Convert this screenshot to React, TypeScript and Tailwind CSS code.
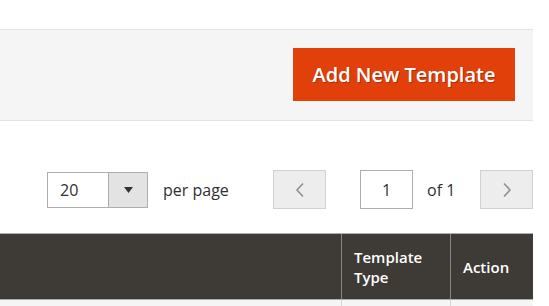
const font = { fontFamily: '"Open Sans", "Liberation Sans", sans-serif' };

const Chevron = ({ dir }: { dir: 'left' | 'right' }) => (
  <svg width="10" height="16" viewBox="0 0 10 16" fill="none" stroke="#8f8f8f" strokeWidth="1.6">
    {dir === 'left' ? <polyline points="8,1.5 2,8 8,14.5" /> : <polyline points="2,1.5 8,8 2,14.5" />}
  </svg>
);

export default function App() {
  return (
    <div className="h-[306px] w-[549px] overflow-hidden bg-white pr-4 text-[#303030]" style={font}>
      <div className="h-[29px]" />

      <div className="flex h-[92px] items-start justify-end border-y border-[#e3e3e3] bg-[#f5f5f5] pr-[18px] pt-[18px]">
        <button className="h-[53px] w-[222px] bg-[#e2400b] text-[20px] font-semibold text-white [text-shadow:1px_1px_0_rgba(0,0,0,0.25)]">Add New Template</button>
      </div>

      <div className="mt-[49px] flex h-[39px] items-center">
        <div className="ml-[47px] flex h-[36px] w-[101px] border border-[#adadad]">
          <span className="flex w-[60px] items-center pl-[12px] text-[16px]">20</span>
          <span className="flex flex-1 items-center justify-center border-l border-[#adadad] bg-[#e3e3e3]">
            <svg width="9" height="6" viewBox="0 0 9 6"><polygon points="0,0 9,0 4.5,6" fill="#333" /></svg>
          </span>
        </div>
        <span className="ml-[15px] w-[110px] text-[16px]">per page</span>

        <button className="flex h-[39px] w-[53px] items-center justify-center border border-[#d1d1d1] bg-[#ededed]">
          <Chevron dir="left" />
        </button>
        <div className="ml-[34px] flex h-[39px] w-[53px] items-center justify-center border border-[#adadad] text-[16px]">1</div>
        <span className="ml-[14px] text-[16px]">of 1</span>
        <button className="ml-auto flex h-[39px] w-[53px] items-center justify-center border border-[#d1d1d1] bg-[#ededed]">
          <Chevron dir="right" />
        </button>
      </div>

      <div className="mt-[24px] flex h-[67px] border-y border-[#adadad] bg-[#3e3a35] text-[15px] font-semibold leading-[20px] text-white">
        <div className="flex-1 border-r border-[#8a837f]" />
        <div className="flex w-[109px] items-center border-r border-[#8a837f] pl-[12px]">
          Template
          <br />
          Type
        </div>
        <div className="flex w-[82px] items-center pl-[12px]">Action</div>
      </div>
      <div className="flex h-[10px] bg-[#f5f5f5]">
        <div className="flex-1 border-r border-[#d6d6d6]" />
        <div className="w-[109px] border-r border-[#d6d6d6]" />
        <div className="w-[82px]" />
      </div>
    </div>
  );
}
